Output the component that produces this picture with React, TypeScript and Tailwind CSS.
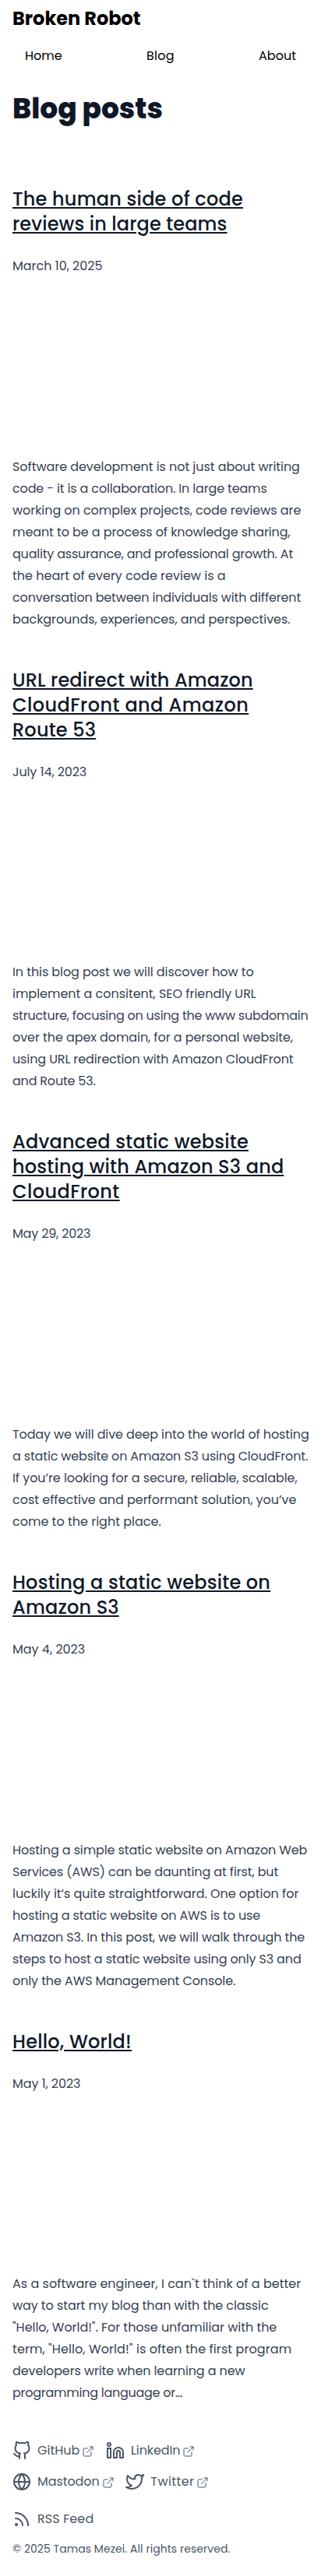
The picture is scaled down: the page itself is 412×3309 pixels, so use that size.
import type { ReactNode } from 'react';
import { ExternalLink } from 'lucide-react';
import { FiGithub, FiGlobe, FiLinkedin, FiRss, FiTwitter } from 'react-icons/fi';
import clsx from 'clsx';

// A line of text and its letter spacing.
type Line = [text: string, tracking: string];

interface Post {
  title: Line[];
  date: Line;
  body: Line[];
}

const posts: Post[] = [
  {
    title: [
      ['The human side of code', 'tracking-[0.22px]'],
      ['reviews in large teams', 'tracking-[0.12px]'],
    ],
    date: ['March 10, 2025', 'tracking-[-0.03px]'],
    body: [
      ['Software development is not just about writing', 'tracking-[-0.07px]'],
      ['code - it is a collaboration. In large teams', 'tracking-[-0.16px]'],
      ['working on complex projects, code reviews are', 'tracking-[-0.06px]'],
      ['meant to be a process of knowledge sharing,', 'tracking-[-0.09px]'],
      ['quality assurance, and professional growth. At', 'tracking-[-0.21px]'],
      ['the heart of every code review is a', 'tracking-normal'],
      ['conversation between individuals with different', 'tracking-[-0.16px]'],
      ['backgrounds, experiences, and perspectives.', 'tracking-[-0.07px]'],
    ],
  },
  {
    title: [
      ['URL redirect with Amazon', 'tracking-[0.12px]'],
      ['CloudFront and Amazon', 'tracking-[0.43px]'],
      ['Route 53', 'tracking-[0.2px]'],
    ],
    date: ['July 14, 2023', 'tracking-[-0.1px]'],
    body: [
      ['In this blog post we will discover how to', 'tracking-[-0.09px]'],
      ['implement a consitent, SEO friendly URL', 'tracking-[-0.03px]'],
      ['structure, focusing on using the www subdomain', 'tracking-[-0.25px]'],
      ['over the apex domain, for a personal website,', 'tracking-[-0.08px]'],
      ['using URL redirection with Amazon CloudFront', 'tracking-[-0.12px]'],
      ['and Route 53.', 'tracking-[-0.2px]'],
    ],
  },
  {
    title: [
      ['Advanced static website', 'tracking-[0.21px]'],
      ['hosting with Amazon S3 and', 'tracking-[0.19px]'],
      ['CloudFront', 'tracking-[0.42px]'],
    ],
    date: ['May 29, 2023', 'tracking-[-0.18px]'],
    body: [
      ['Today we will dive deep into the world of hosting', 'tracking-[-0.12px]'],
      ['a static website on Amazon S3 using CloudFront.', 'tracking-[-0.17px]'],
      ['If you’re looking for a secure, reliable, scalable,', 'tracking-[-0.07px]'],
      ['cost effective and performant solution, you’ve', 'tracking-[-0.03px]'],
      ['come to the right place.', 'tracking-normal'],
    ],
  },
  {
    title: [
      ['Hosting a static website on', 'tracking-[0.2px]'],
      ['Amazon S3', 'tracking-[0.18px]'],
    ],
    date: ['May 4, 2023', 'tracking-normal'],
    body: [
      ['Hosting a simple static website on Amazon Web', 'tracking-[-0.12px]'],
      ['Services (AWS) can be daunting at first, but', 'tracking-[-0.13px]'],
      ['luckily it’s quite straightforward. One option for', 'tracking-[-0.05px]'],
      ['hosting a static website on AWS is to use', 'tracking-[-0.15px]'],
      ['Amazon S3. In this post, we will walk through the', 'tracking-[-0.12px]'],
      ['steps to host a static website using only S3 and', 'tracking-[-0.14px]'],
      ['only the AWS Management Console.', 'tracking-[-0.11px]'],
    ],
  },
  {
    title: [['Hello, World!', 'tracking-[0.22px]']],
    date: ['May 1, 2023', 'tracking-[-0.08px]'],
    body: [
      ['As a software engineer, I can`t think of a better', 'tracking-[0.01px]'],
      ['way to start my blog than with the classic', 'tracking-[-0.09px]'],
      ['"Hello, World!". For those unfamiliar with the', 'tracking-[-0.05px]'],
      ['term, "Hello, World!" is often the first program', 'tracking-[0.08px]'],
      ['developers write when learning a new', 'tracking-[-0.11px]'],
      ['programming language or…', 'tracking-[-0.26px]'],
    ],
  },
];

function Lines({ lines }: { lines: Line[] }) {
  return lines.map(([text, tracking]) => (
    <span key={text} className={clsx('block w-fit whitespace-nowrap', tracking)}>
      {text}
    </span>
  ));
}

function SocialLink({ icon, label, tracking }: { icon: ReactNode; label: string; tracking: string }) {
  return (
    <a href="#" className="flex h-6 items-center">
      {icon}
      <span className={clsx('ml-2', tracking)}>{label}</span>
      <ExternalLink size={16} strokeWidth={1.5} className="mt-0.5 ml-[3px]" />
    </a>
  );
}

export default function App() {
  return (
    <div className="min-h-[3309px] bg-white px-4 pt-2 font-['Poppins',Inter,sans-serif] text-base text-black">
      <header>
        <a href="#" className="block text-2xl font-bold">
          Broken Robot
        </a>
        <nav className="mt-5 flex justify-between px-4">
          <a href="#">Home</a>
          <a href="#" className="tracking-[0.2px]">Blog</a>
          <a href="#">About</a>
        </nav>
      </header>

      <main className="pt-9 leading-7 text-gray-700">
        <h1 className="mb-8 text-4xl font-extrabold text-gray-900">Blog posts</h1>
        {posts.map((post) => (
          <article key={post.date[0]} className="pt-12">
            <h2 className="mb-6 text-2xl font-medium text-gray-900 underline">
              <Lines lines={post.title} />
            </h2>
            <p className={post.date[1]}>{post.date[0]}</p>
            <p className="mt-[229.7px]">
              <Lines lines={post.body} />
            </p>
          </article>
        ))}
      </main>

      <footer className="mt-12 text-gray-600">
        <div className="flex max-w-xs flex-wrap gap-x-[14.7px] gap-y-4">
          <SocialLink icon={<FiGithub size={24} />} label="GitHub" tracking="tracking-normal" />
          <SocialLink icon={<FiLinkedin size={24} />} label="LinkedIn" tracking="tracking-[-0.1px]" />
          <SocialLink icon={<FiGlobe size={24} />} label="Mastodon" tracking="tracking-[-0.08px]" />
          <SocialLink icon={<FiTwitter size={24} />} label="Twitter" tracking="tracking-[0.4px]" />
        </div>
        <a href="#" className="mt-6 flex h-6 items-center gap-2">
          <FiRss size={24} />
          <span className="tracking-[0.1px]">RSS Feed</span>
        </a>
        <p className="mt-4 text-sm tracking-[0.05px]">© 2025 Tamas Mezei. All rights reserved.</p>
      </footer>
    </div>
  );
}
